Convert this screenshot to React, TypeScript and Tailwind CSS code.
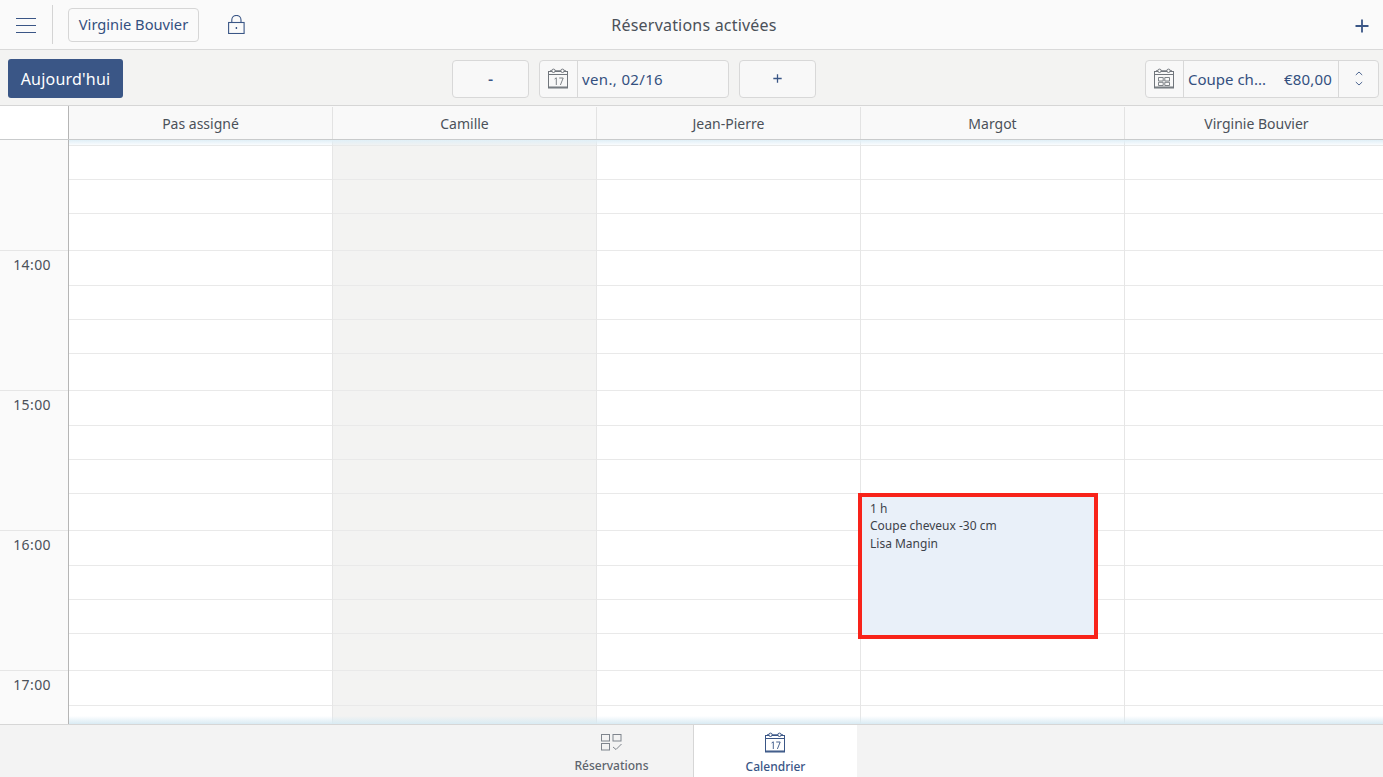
const font = { fontFamily: '"Noto Sans", sans-serif' };

const rows = [6, 34, 34, 37, 35, 34, 34, 37, 35, 34, 34, 37, 35, 34, 34, 37, 35];
const heightClass: Record<number, string> = {
  6: "h-[6px]",
  34: "h-[34px]",
  35: "h-[35px]",
  37: "h-[37px]",
};
const columns = ["Pas assigné", "Camille", "Jean-Pierre", "Margot", "Virginie Bouvier"];

function CalendarIcon({ className = "", grid = false }: { className?: string; grid?: boolean }) {
  return (
    <svg viewBox="0 0 21 21" width="21" height="21" fill="none" stroke="currentColor" strokeWidth="1" className={className}>
      <rect x="0.5" y="3.5" width="19" height="16.5" />
      <path d="M0.5 6.5H19.5" />
      <path d="M0.5 19.2H19.5" strokeWidth="1.4" />
      <path d="M2 2.8H18" />
      <circle cx="5.5" cy="2.8" r="1.7" fill="#f8f8f8" />
      <circle cx="14.5" cy="2.8" r="1.7" fill="#f8f8f8" />
      {grid ? (
        <path d="M4.5 9.5H9.2V13H4.5ZM10.8 9.5H15.5V13H10.8ZM4.5 14.3H9.2V17.5H4.5ZM10.8 14.3H15.5V17.5H10.8Z" strokeWidth="0.9" />
      ) : (
        <path d="M6.6 11L8.3 9.8V17M11.2 10H15.2L12.4 17" strokeWidth="0.9" />
      )}
    </svg>
  );
}

function ReservationsIcon() {
  return (
    <svg viewBox="0 0 22 17" width="22" height="17" fill="none" stroke="#7f858d" strokeWidth="1">
      <rect x="0.5" y="0.5" width="8" height="6.5" />
      <rect x="12" y="0.5" width="8" height="6.5" />
      <rect x="0.5" y="9.5" width="8" height="6.5" />
      <path d="M12 13L15 15.5L20.5 10" />
    </svg>
  );
}

function LockIcon() {
  return (
    <svg viewBox="0 0 17 19" width="17" height="19" fill="none" stroke="#3a5686" strokeWidth="1.1">
      <rect x="0.6" y="7.5" width="15.5" height="11" />
      <path d="M3.8 7.5V5A4.6 4.6 0 0 1 13 5V7.5" />
      <path d="M8.4 12V14" strokeWidth="1.4" />
    </svg>
  );
}

function Hamburger() {
  return (
    <svg viewBox="0 0 20 17" width="20" height="17" fill="none" stroke="#3a5686" strokeWidth="1">
      <path d="M0 2.5H20M0 9.5H20M0 16.5H20" />
    </svg>
  );
}

function Plus({ size = 14, stroke = 1.8 }: { size?: number; stroke?: number }) {
  return (
    <svg viewBox="0 0 14 14" width={size} height={size} fill="none" stroke="#3a5686" strokeWidth={stroke}>
      <path d="M7 0.5V13.5M0.5 7H13.5" />
    </svg>
  );
}

function DayColumn({ name }: { name: string }) {
  const off = name === "Camille";
  return (
    <div className={`relative w-[264px] shrink-0 border-r border-[#e6e6e6] ${off ? "bg-[#f3f3f2]" : "bg-white"}`}>
      {rows.map((h, i) => (
        <div key={i} className={`${heightClass[h]} border-b border-[#e9e9e9]`} />
      ))}
      {name === "Margot" && (
        <div className="absolute left-[-3px] top-[353px] h-[146px] w-[240px] border-[4px] border-[#f8231a] bg-[#e9f0f9] pl-[8px] pt-[3px] text-[12px] leading-[17.5px] text-[#3d4249]">
          <div>1 h</div>
          <div className="-mt-px">Coupe cheveux -30 cm</div>
          <div className="mt-px">Lisa Mangin</div>
        </div>
      )}
    </div>
  );
}

export default function App() {
  return (
    <div style={font} className="flex h-[777px] w-[1383px] flex-col overflow-hidden bg-white">
      {/* Top bar */}
      <header className="grid h-[50px] shrink-0 grid-cols-[1fr_auto_1fr] items-center border-b border-[#d9d9d9] bg-[#fafafa]">
        <div className="flex items-center">
          <div className="ml-[16px]"><Hamburger /></div>
          <div className="ml-[16px] h-[39px] w-px bg-[#d4d4d4]" />
          <button className="ml-[15px] flex h-[34px] w-[131px] items-center justify-center rounded-[4px] border border-[#d6d6d6] text-[14.7px] text-[#34507f]">
            Virginie Bouvier
          </button>
          <div className="ml-[29px]"><LockIcon /></div>
        </div>
        <div className="pl-[5px] text-[16px] tracking-[0.2px] text-[#4b5159]">Réservations activées</div>
        <div className="flex justify-end pr-[14px] pt-[2px]"><Plus /></div>
      </header>

      {/* Toolbar */}
      <div className="flex h-[56px] shrink-0 items-center justify-between border-b border-[#d6d6d6] bg-[#f3f3f2] pl-[8px] pr-[4px] pt-[2px]">
        <button className="h-[39px] w-[115px] rounded-[3px] bg-[#3a5686] text-[16px] tracking-[0.2px] text-white">Aujourd'hui</button>
        <div className="flex items-center gap-[10px]">
          <button className="flex h-[38px] w-[77px] items-center justify-center rounded-[4px] border border-[#d8d8d8] bg-[#f8f8f8] text-[16px] font-medium text-[#3a5686]">-</button>
          <div className="flex h-[38px] w-[190px] items-center rounded-[4px] border border-[#d8d8d8] bg-[#f8f8f8]">
            <div className="flex h-full w-[38px] items-center justify-center border-r border-[#d8d8d8] text-[#71767c]">
              <CalendarIcon />
            </div>
            <span className="pl-[4px] pt-px text-[15px] tracking-[0.35px] text-[#34507f]">ven., 02/16</span>
          </div>
          <button className="flex h-[38px] w-[77px] items-center justify-center rounded-[4px] border border-[#d8d8d8] bg-[#f8f8f8]"><Plus size={9} stroke={2} /></button>
        </div>
        <div className="flex h-[38px] w-[234px] items-center rounded-[4px] border border-[#d8d8d8] bg-[#f8f8f8]">
          <div className="flex h-full w-[38px] shrink-0 items-center justify-center border-r border-[#d8d8d8] text-[#71767c]">
            <CalendarIcon grid />
          </div>
          <div className="flex flex-1 justify-between pl-[4px] pr-[6px] pt-px text-[15px] text-[#34507f]">
            <span>Coupe ch...</span>
            <span className="tracking-[0.2px]">€80,00</span>
          </div>
          <div className="flex h-full w-[40px] shrink-0 items-center justify-center border-l border-[#d8d8d8]">
            <svg viewBox="0 0 8 15" width="8" height="15" fill="none" stroke="#3a5686" strokeWidth="0.9">
              <path d="M0.8 4L4 1L7.2 4M0.8 11L4 14L7.2 11" />
            </svg>
          </div>
        </div>
      </div>

      {/* Column headers */}
      <div className="flex h-[34px] shrink-0 border-b border-[#c9cbcc] bg-[#f9f9f9] pt-px">
        <div className="-mt-px w-[69px] shrink-0 border-r border-[#b5b5b5] bg-white" />
        {columns.map((c) => (
          <div
            key={c}
            className="flex w-[264px] shrink-0 items-center justify-center border-r border-[#e3e3e3] text-[14px] text-[#4b5159]"
          >
            {c}
          </div>
        ))}
      </div>

      {/* Calendar body */}
      <div className="relative flex min-h-0 flex-1 overflow-hidden">
        <div className="w-[69px] shrink-0 border-r border-[#b5b5b5] bg-[#fafafa]">
          <div className="h-[111px] border-b border-[#e6e6e6]" />
          {["14:00", "15:00", "16:00", "17:00"].map((t) => (
            <div key={t} className="h-[140px] border-b border-[#e6e6e6] pr-[17px] pt-[4px] text-right text-[14px] leading-[20px] tracking-[0.4px] text-[#4b5159]">
              {t}
            </div>
          ))}
        </div>
        {columns.map((c) => (
          <DayColumn key={c} name={c} />
        ))}
        <div className="pointer-events-none absolute left-[69px] right-0 top-0 h-[6px] bg-gradient-to-b from-[#e0eff7] to-transparent" />
        <div className="pointer-events-none absolute bottom-0 left-[69px] right-0 h-[8px] bg-gradient-to-t from-[#d9ebf3] to-transparent" />
      </div>

      {/* Bottom tabs */}
      <nav className="flex h-[53px] shrink-0 justify-center border-t border-[#d6d6d6] bg-[#f3f3f3] pl-[4px]">
        <div className="flex w-[164px] flex-col items-center border-r border-[#d6d6d6] pt-[9px] text-[12px] font-medium text-[#5d646d]">
          <ReservationsIcon />
          <span className="mt-[7px] leading-[16px]">Réservations</span>
        </div>
        <div className="flex w-[163px] flex-col items-center bg-white pt-[7px] text-[12px] font-medium text-[#3a5686]">
          <CalendarIcon />
          <span className="mt-[6px] leading-[16px]">Calendrier</span>
        </div>
      </nav>
    </div>
  );
}
